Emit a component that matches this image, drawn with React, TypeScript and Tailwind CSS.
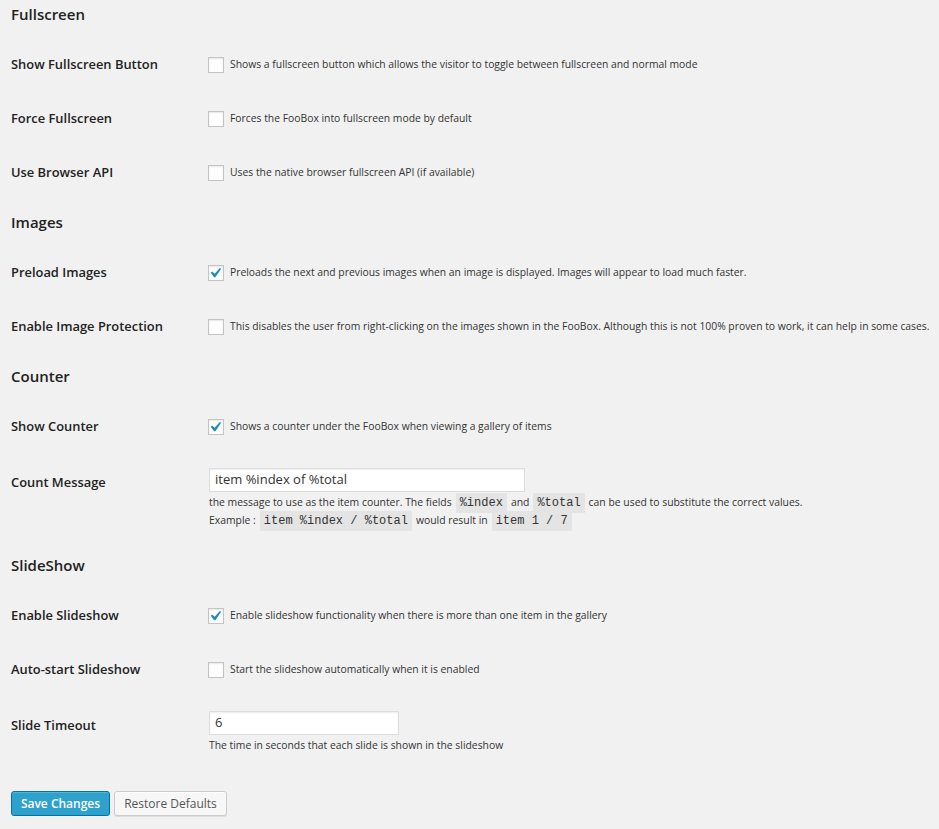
import React from "react";

const font = { fontFamily: '"Open Sans", "Noto Sans", sans-serif' };

function Check({ checked }: { checked?: boolean }) {
  return (
    <span className="relative inline-flex h-[16px] w-[16px] shrink-0 items-center justify-center border border-[#c4c4c4] bg-white shadow-[inset_0_1px_2px_rgba(0,0,0,0.1)]">
      {checked && (
        <svg width="20" height="20" viewBox="0 0 20 20" className="absolute left-[-4px] top-[-3px]">
          <path d="M14.83 4.89l1.34.94-5.81 8.38H9.02L5.78 9.67l1.34-1.25 2.57 2.4z" fill="#1e8cbe" />
        </svg>
      )}
    </span>
  );
}

function Heading({ children }: { children: React.ReactNode }) {
  return (
    <div className="flex h-[28px] items-center">
      <h3 className="text-[15px] font-semibold text-[#222]">{children}</h3>
    </div>
  );
}

function CheckRow({ label, desc, checked }: { label: string; desc: string; checked?: boolean }) {
  return (
    <div className="flex h-[54px] items-center">
      <div className="w-[197px] shrink-0 text-[12.9px] font-semibold text-[#222]">{label}</div>
      <div className="flex items-center gap-[6px]">
        <Check checked={checked} />
        <span className="whitespace-nowrap text-[10.35px] text-[#333]">{desc}</span>
      </div>
    </div>
  );
}

function Code({ children }: { children: React.ReactNode }) {
  return (
    <code
      className="mx-[4px] bg-[#e4e4e4] px-[4px] py-[1px] text-[12px] text-[#333]"
      style={{ fontFamily: '"Liberation Mono", "DejaVu Sans Mono", monospace' }}
    >
      {children}
    </code>
  );
}

export default function App() {
  return (
    <div className="min-h-[829px] w-[939px] bg-[#f1f1f1] pl-[11px]" style={font}>
      <Heading>Fullscreen</Heading>
      <div className="flex flex-col pb-[8px] pt-[10px]">
        <CheckRow label="Show Fullscreen Button" desc="Shows a fullscreen button which allows the visitor to toggle between fullscreen and normal mode" />
        <CheckRow label="Force Fullscreen" desc="Forces the FooBox into fullscreen mode by default" />
        <CheckRow label="Use Browser API" desc="Uses the native browser fullscreen API (if available)" />
      </div>
      <Heading>Images</Heading>
      <div className="flex flex-col pb-[8px] pt-[10px]">
        <CheckRow checked label="Preload Images" desc="Preloads the next and previous images when an image is displayed. Images will appear to load much faster." />
        <CheckRow label="Enable Image Protection" desc="This disables the user from right-clicking on the images shown in the FooBox. Although this is not 100% proven to work, it can help in some cases." />
      </div>
      <Heading>Counter</Heading>
      <div className="flex flex-col pb-[8px] pt-[10px]">
        <CheckRow checked label="Show Counter" desc="Shows a counter under the FooBox when viewing a gallery of items" />
        <div className="flex pb-[13px] pt-[14px]">
          <div className="w-[197px] shrink-0 pt-[5px] text-[12.9px] font-semibold text-[#222]">Count Message</div>
          <div className="ml-[1px] flex flex-col">
            <div className="flex h-[24px] w-[316px] items-center border border-[#ddd] bg-white px-[5px] text-[13px] text-[#333] shadow-[inset_0_1px_2px_rgba(0,0,0,0.07)]">
              item %index of %total
            </div>
            <div className="mt-[2px] flex h-[18px] items-center whitespace-nowrap text-[10.4px] text-[#333]">
              the message to use as the item counter. The fields <Code>%index</Code> and <Code>%total</Code> can be used to substitute the correct values.
            </div>
            <div className="flex h-[18px] items-center whitespace-nowrap text-[10.4px] text-[#333]">
              Example : <Code>item %index / %total</Code> would result in <Code>item 1 / 7</Code>
            </div>
          </div>
        </div>
      </div>
      <Heading>SlideShow</Heading>
      <div className="flex flex-col pb-[8px] pt-[10px]">
        <CheckRow checked label="Enable Slideshow" desc="Enable slideshow functionality when there is more than one item in the gallery" />
        <CheckRow label="Auto-start Slideshow" desc="Start the slideshow automatically when it is enabled" />
        <div className="flex pb-[13px] pt-[14px]">
          <div className="w-[197px] shrink-0 pt-[5px] text-[12.9px] font-semibold text-[#222]">Slide Timeout</div>
          <div className="ml-[1px] flex flex-col">
            <div className="flex h-[24px] w-[190px] items-center border border-[#ddd] bg-white px-[5px] text-[13px] text-[#333] shadow-[inset_0_1px_2px_rgba(0,0,0,0.07)]">
              6
            </div>
            <div className="mt-[2px] flex h-[18px] items-center whitespace-nowrap text-[10.35px] text-[#333]">
              The time in seconds that each slide is shown in the slideshow
            </div>
          </div>
        </div>
      </div>
      <div className="mt-[15px] flex gap-[4px]">
        <button className="flex h-[25px] w-[99px] items-center justify-center rounded-[3px] border border-[#0074a2] bg-[#2ea2cc] text-[12px] font-semibold text-white shadow-[inset_0_1px_0_rgba(120,200,230,0.5)]">
          Save Changes
        </button>
        <button className="flex h-[25px] w-[113px] items-center justify-center rounded-[3px] border border-[#ccc] bg-[#f7f7f7] text-[12px] text-[#555] shadow-[inset_0_1px_0_#fff,0_1px_0_rgba(0,0,0,0.08)]">
          Restore Defaults
        </button>
      </div>
    </div>
  );
}
